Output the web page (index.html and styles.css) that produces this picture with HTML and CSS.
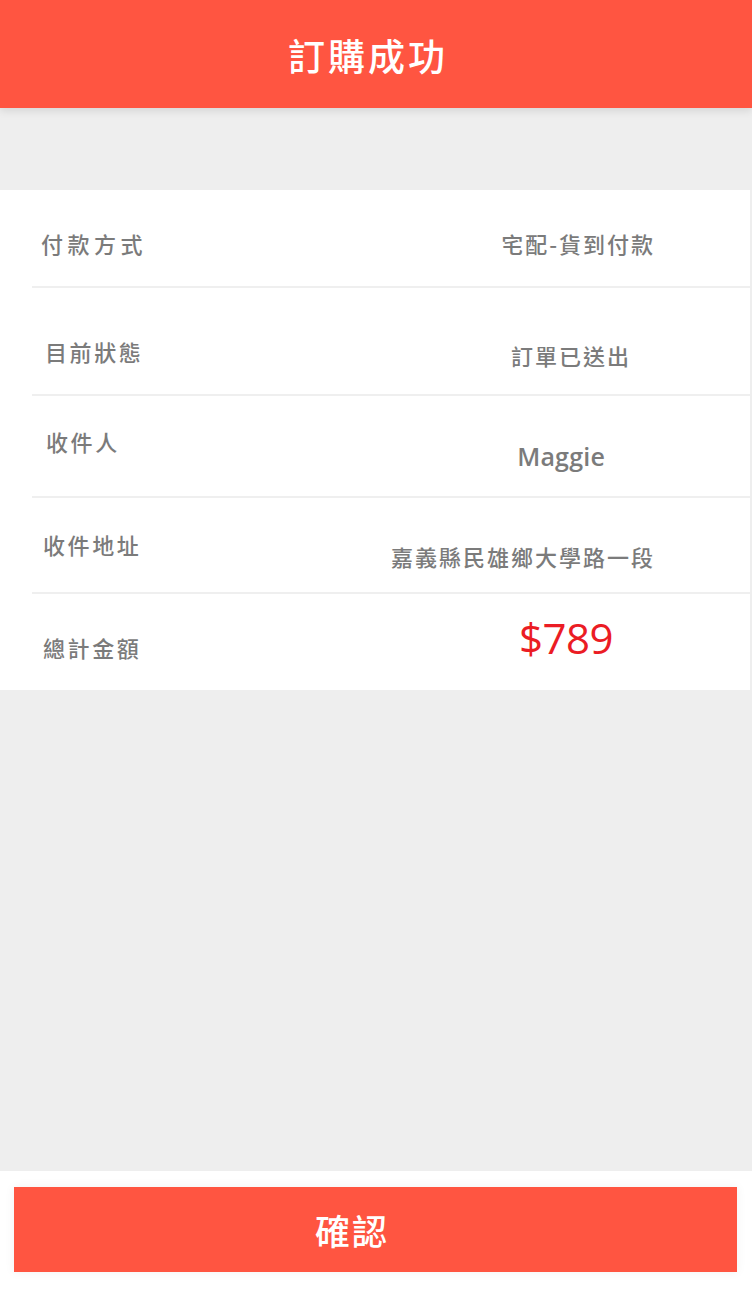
FILE: index.html
```html
<!DOCTYPE html>
<html lang="zh-Hant">
<head>
<meta charset="utf-8">
<title>訂購成功</title>
<link rel="stylesheet" href="styles.css">
</head>
<body>
<div class="page">
  <header class="topbar">
    <h1 class="title">訂購成功</h1>
  </header>
  <main class="content">
    <section class="card">
      <div class="row row-1">
        <span class="label label-wide">付款方式</span>
        <span class="value">宅配-貨到付款</span>
      </div>
      <div class="row row-2">
        <span class="label">目前狀態</span>
        <span class="value">訂單已送出</span>
      </div>
      <div class="row row-3">
        <span class="label">收件人</span>
        <span class="value value-latin">Maggie</span>
      </div>
      <div class="row row-4">
        <span class="label">收件地址</span>
        <span class="value">嘉義縣民雄鄉大學路一段</span>
      </div>
      <div class="row row-5">
        <span class="label">總計金額</span>
        <span class="value value-price">$789</span>
      </div>
    </section>
  </main>
  <footer class="footer">
    <button class="confirm" type="button">確認</button>
  </footer>
</div>
</body>
</html>
```

FILE: styles.css
```css
* {
  box-sizing: border-box;
}

html, body {
  margin: 0;
  padding: 0;
}

body {
  font-family: "Noto Sans CJK TC", "Noto Sans", sans-serif;
  background: #eeeeee;
}

.page {
  width: 752px;
  height: 1290px;
  display: flex;
  flex-direction: column;
  background: #eeeeee;
}

.topbar {
  height: 108px;
  flex: 0 0 108px;
  background: #ff5541;
  display: flex;
  align-items: center;
  justify-content: center;
  padding-right: 16px;
  box-shadow: 0 3px 8px rgba(0, 0, 0, 0.10);
  position: relative;
  z-index: 1;
}

.title {
  margin: 0;
  color: #ffffff;
  font-size: 37px;
  font-weight: 500;
  letter-spacing: 3px;
  line-height: 1;
  margin-top: 2px;
}

.content {
  flex: 1 1 auto;
  padding-top: 82px;
}

.card {
  background: #ffffff;
  width: 750px;
}

.row {
  display: flex;
  align-items: center;
  margin-left: 32px;
  padding-left: 11px;
  border-bottom: 2px solid #efefef;
}

.row-5 {
  border-bottom: none;
}

.label {
  color: #7b7b7b;
  font-size: 22px;
  font-weight: 500;
  letter-spacing: 2.6px;
  line-height: 30px;
}

.label-wide {
  letter-spacing: 4.5px;
  margin-left: -2px;
}

.value {
  margin-left: auto;
  color: #7b7b7b;
  font-size: 22px;
  font-weight: 500;
  letter-spacing: 2px;
  line-height: 30px;
}

.value-latin {
  font-family: "Open Sans", "Noto Sans", sans-serif;
  font-size: 25px;
  font-weight: 600;
  letter-spacing: 0.2px;
}

.value-price {
  font-family: "Open Sans", "Noto Sans", sans-serif;
  font-size: 42px;
  font-weight: 400;
  letter-spacing: -0.5px;
  color: #eb1c24;
  line-height: 50px;
}

/* per-row placement */
.row-1 { height: 98px; }
.row-1 .label { margin-top: 9px; }
.row-1 .value { margin-top: 9px; margin-right: 95px; }

.row-2 { height: 108px; }
.row-2 .label { margin-top: 20px; margin-left: 2px; }
.row-2 .value { margin-top: 28px; margin-right: 119px; }

.row-3 { height: 102px; }
.row-3 .label { margin-top: -10px; margin-left: 3px; }
.row-3 .value { margin-top: 20px; margin-right: 145px; }

.row-4 { height: 96px; }
.row-4 .label { margin-top: -2px; }
.row-4 .value { margin-top: 22px; margin-right: 95px; }

.row-5 { height: 96px; }
.row-5 .label { margin-top: 10px; }
.row-5 .value { margin-top: -8px; margin-right: 137px; }

.footer {
  flex: 0 0 119px;
  background: #ffffff;
  padding: 16px 15px 18px 14px;
}

.confirm {
  display: flex;
  align-items: center;
  justify-content: center;
  width: 100%;
  height: 85px;
  border: none;
  background: #ff5541;
  color: #ffffff;
  font-family: "Noto Sans CJK TC", "Noto Sans", sans-serif;
  font-size: 35px;
  font-weight: 500;
  letter-spacing: 2px;
  padding: 0 47px 0 0;
  box-shadow: 0 0 10px rgba(0, 0, 0, 0.06);
}
```
